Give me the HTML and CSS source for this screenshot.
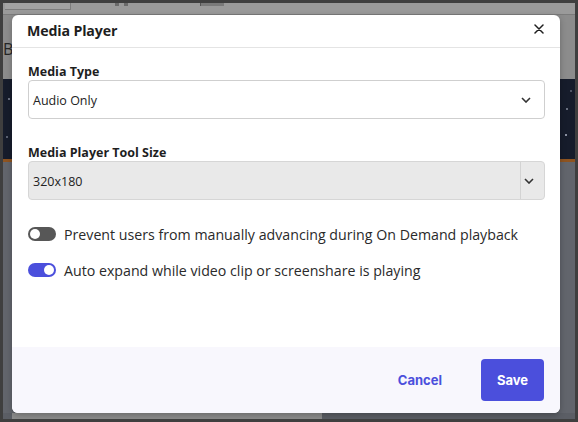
FILE: index.html
```html
<!DOCTYPE html>
<html lang="en">
<head>
<meta charset="utf-8">
<title>Media Player</title>
<link rel="stylesheet" href="styles.css">
</head>
<body>
<div class="frame">
  <div class="app">
    <div class="topbar">
      <span class="tb-tab"></span>
      <span class="tb-icons"><i></i><i></i></span>
      <span class="tb-block"></span>
    </div>
    <div class="upper"><span class="bo">Bo</span></div>
    <div class="stars"></div>
    <div class="accent"></div>
    <div class="lower">
      <div class="bottom-strip"><span class="strip-light"></span></div>
    </div>

    <div class="modal" role="dialog" aria-labelledby="mp-title">
      <div class="modal-header">
        <h2 id="mp-title" class="modal-title">Media Player</h2>
        <button class="close-btn" aria-label="Close">
          <svg width="10" height="10" viewBox="0 0 10 10"><path d="M1 1 L9 9 M9 1 L1 9" stroke="#1f1f1f" stroke-width="1.5" stroke-linecap="round" fill="none"/></svg>
        </button>
      </div>
      <div class="modal-body">
        <label class="field-label">Media Type</label>
        <div class="select">
          <span class="select-value">Audio Only</span>
          <span class="chev">
            <svg width="10" height="6" viewBox="0 0 10 6"><path d="M1 1 L5 5 L9 1" stroke="#333" stroke-width="1.6" fill="none"/></svg>
          </span>
        </div>

        <label class="field-label second">Media Player Tool Size</label>
        <div class="select disabled">
          <span class="select-value">320x180</span>
          <span class="chev split">
            <svg width="10" height="6" viewBox="0 0 10 6"><path d="M1 1 L5 5 L9 1" stroke="#333" stroke-width="1.6" fill="none"/></svg>
          </span>
        </div>

        <div class="toggle-row first">
          <span class="toggle"><span class="knob"></span></span>
          <span class="toggle-text">Prevent users from manually advancing during On Demand playback</span>
        </div>
        <div class="toggle-row">
          <span class="toggle on"><span class="knob"></span></span>
          <span class="toggle-text">Auto expand while video clip or screenshare is playing</span>
        </div>
      </div>
      <div class="modal-footer">
        <button class="btn-cancel">Cancel</button>
        <button class="btn-save">Save</button>
      </div>
    </div>
  </div>
</div>
</body>
</html>
```

FILE: styles.css
```css
* { box-sizing: border-box; }

html, body {
  margin: 0;
  padding: 0;
}

body {
  background: #3f3f3f;
  font-family: "Open Sans", "Noto Sans", "Liberation Sans", sans-serif;
  color: #222;
}

.frame {
  width: 578px;
  height: 422px;
  padding: 3px;
}

.app {
  position: relative;
  width: 572px;
  height: 416px;
  display: flex;
  flex-direction: column;
  overflow: hidden;
}

.topbar {
  height: 12px;
  background: #9a9a9a;
  border-bottom: 1px solid #7b7b7b;
  display: flex;
  align-items: flex-start;
}

.tb-tab {
  width: 66px;
  height: 7px;
  margin-left: 2px;
  border-right: 1px solid #7d7d7d;
  border-bottom: 1px solid #7d7d7d;
  background: #a3a3a3;
}

.tb-icons {
  display: flex;
  gap: 5px;
  margin-left: 44px;
}

.tb-icons i {
  width: 4px;
  height: 3px;
  background: #6b6b6b;
}

.tb-block {
  width: 24px;
  height: 3px;
  margin-left: 72px;
  background: #7a7a7a;
  border-left: 1px solid #555;
}

.upper {
  height: 64px;
  background: #8c8c8c;
  display: flex;
  align-items: flex-start;
}

.bo {
  margin-top: 26px;
  margin-left: 0;
  font-size: 16px;
  color: #262626;
  line-height: 16px;
}

.stars {
  height: 80px;
  background-color: #161c2b;
  background-image:
    radial-gradient(circle at 6px 20px, #6a7080 0 1px, transparent 1.5px),
    radial-gradient(circle at 4px 58px, #5a6070 0 1px, transparent 1.5px),
    radial-gradient(circle at 564px 30px, #6a7080 0 1px, transparent 1.5px),
    radial-gradient(circle at 563px 56px, #8a90a0 0 1px, transparent 1.5px),
    radial-gradient(circle at 568px 12px, #505666 0 1px, transparent 1.5px);
}

.accent {
  height: 3px;
  background: #8e5421;
}

.lower {
  flex: 1;
  background: #62656c;
  display: flex;
  flex-direction: column;
  justify-content: flex-end;
}

.bottom-strip {
  height: 6px;
  display: flex;
  background: #5b5e65;
}

.strip-light {
  width: 310px;
  margin-left: 9px;
  background: #8c8c8c;
}

/* Modal sits over the background page */
.modal {
  position: absolute;
  left: 9px;
  top: 12px;
  width: 548px;
  height: 398px;
  background: #fff;
  border-radius: 6px;
  display: flex;
  flex-direction: column;
  overflow: hidden;
  box-shadow: 0 2px 6px rgba(0, 0, 0, 0.25);
}

.modal-header {
  height: 33px;
  border-bottom: 1px solid #e4e4e4;
  display: flex;
  align-items: center;
  justify-content: space-between;
  padding: 0 15px 2px 15px;
}

.modal-title {
  margin: 0;
  font-size: 14.2px;
  font-weight: 700;
  color: #1e1e1e;
  letter-spacing: -0.15px;
}

.close-btn {
  border: 0;
  background: none;
  padding: 0;
  width: 12px;
  height: 12px;
  display: flex;
  align-items: center;
  justify-content: center;
  margin-top: -2px;
}

.modal-body {
  flex: 1;
  padding: 16px 15px 0 16px;
  display: flex;
  flex-direction: column;
}

.field-label {
  font-size: 12.5px;
  font-weight: 700;
  line-height: 16px;
  color: #1e1e1e;
}

.field-label.second {
  margin-top: 26px;
}

.select {
  height: 39px;
  border: 1px solid #cfcfcf;
  border-radius: 4px;
  display: flex;
  align-items: center;
  background: #fff;
}

.select.disabled {
  background: #e9e9e9;
  border-color: #d6d6d6;
}

.select-value {
  flex: 1;
  padding-left: 4px;
  padding-top: 1px;
  font-size: 12.5px;
  color: #222;
}

.chev {
  width: 24px;
  height: 100%;
  display: flex;
  align-items: center;
  justify-content: flex-start;
  padding-left: 7px;
  margin-right: 6px;
}

.chev.split {
  border-left: 1px solid #d3d3d3;
  margin-right: 0;
  width: 24px;
  padding-left: 3px;
}

.toggle-row {
  display: flex;
  align-items: center;
  gap: 8px;
  height: 20px;
  margin-top: 16px;
}

.toggle-row.first {
  margin-top: 24px;
}

.toggle {
  width: 28px;
  height: 14px;
  border-radius: 7px;
  background: #575757;
  display: flex;
  align-items: center;
  padding: 0 2px;
}

.toggle .knob {
  width: 10px;
  height: 10px;
  border-radius: 50%;
  background: #fff;
}

.toggle.on {
  background: #4b4fdc;
  justify-content: flex-end;
}

.toggle-text {
  font-size: 14.2px;
  color: #2a2a2a;
  white-space: nowrap;
}

.modal-footer {
  height: 66px;
  background: #f8f7fd;
  display: flex;
  align-items: center;
  justify-content: flex-end;
  padding: 0 16px 1px 0;
  gap: 23px;
}

.btn-cancel {
  border: 0;
  background: none;
  font-family: "Inter", "Open Sans", sans-serif;
  font-size: 13px;
  font-weight: 700;
  color: #4b4fdc;
  padding: 8px 16px;
}

.btn-save {
  width: 63px;
  height: 42px;
  border: 0;
  border-radius: 4px;
  background: #4b4fdc;
  color: #fff;
  font-family: "Inter", "Open Sans", sans-serif;
  font-size: 13px;
  font-weight: 700;
}
```
